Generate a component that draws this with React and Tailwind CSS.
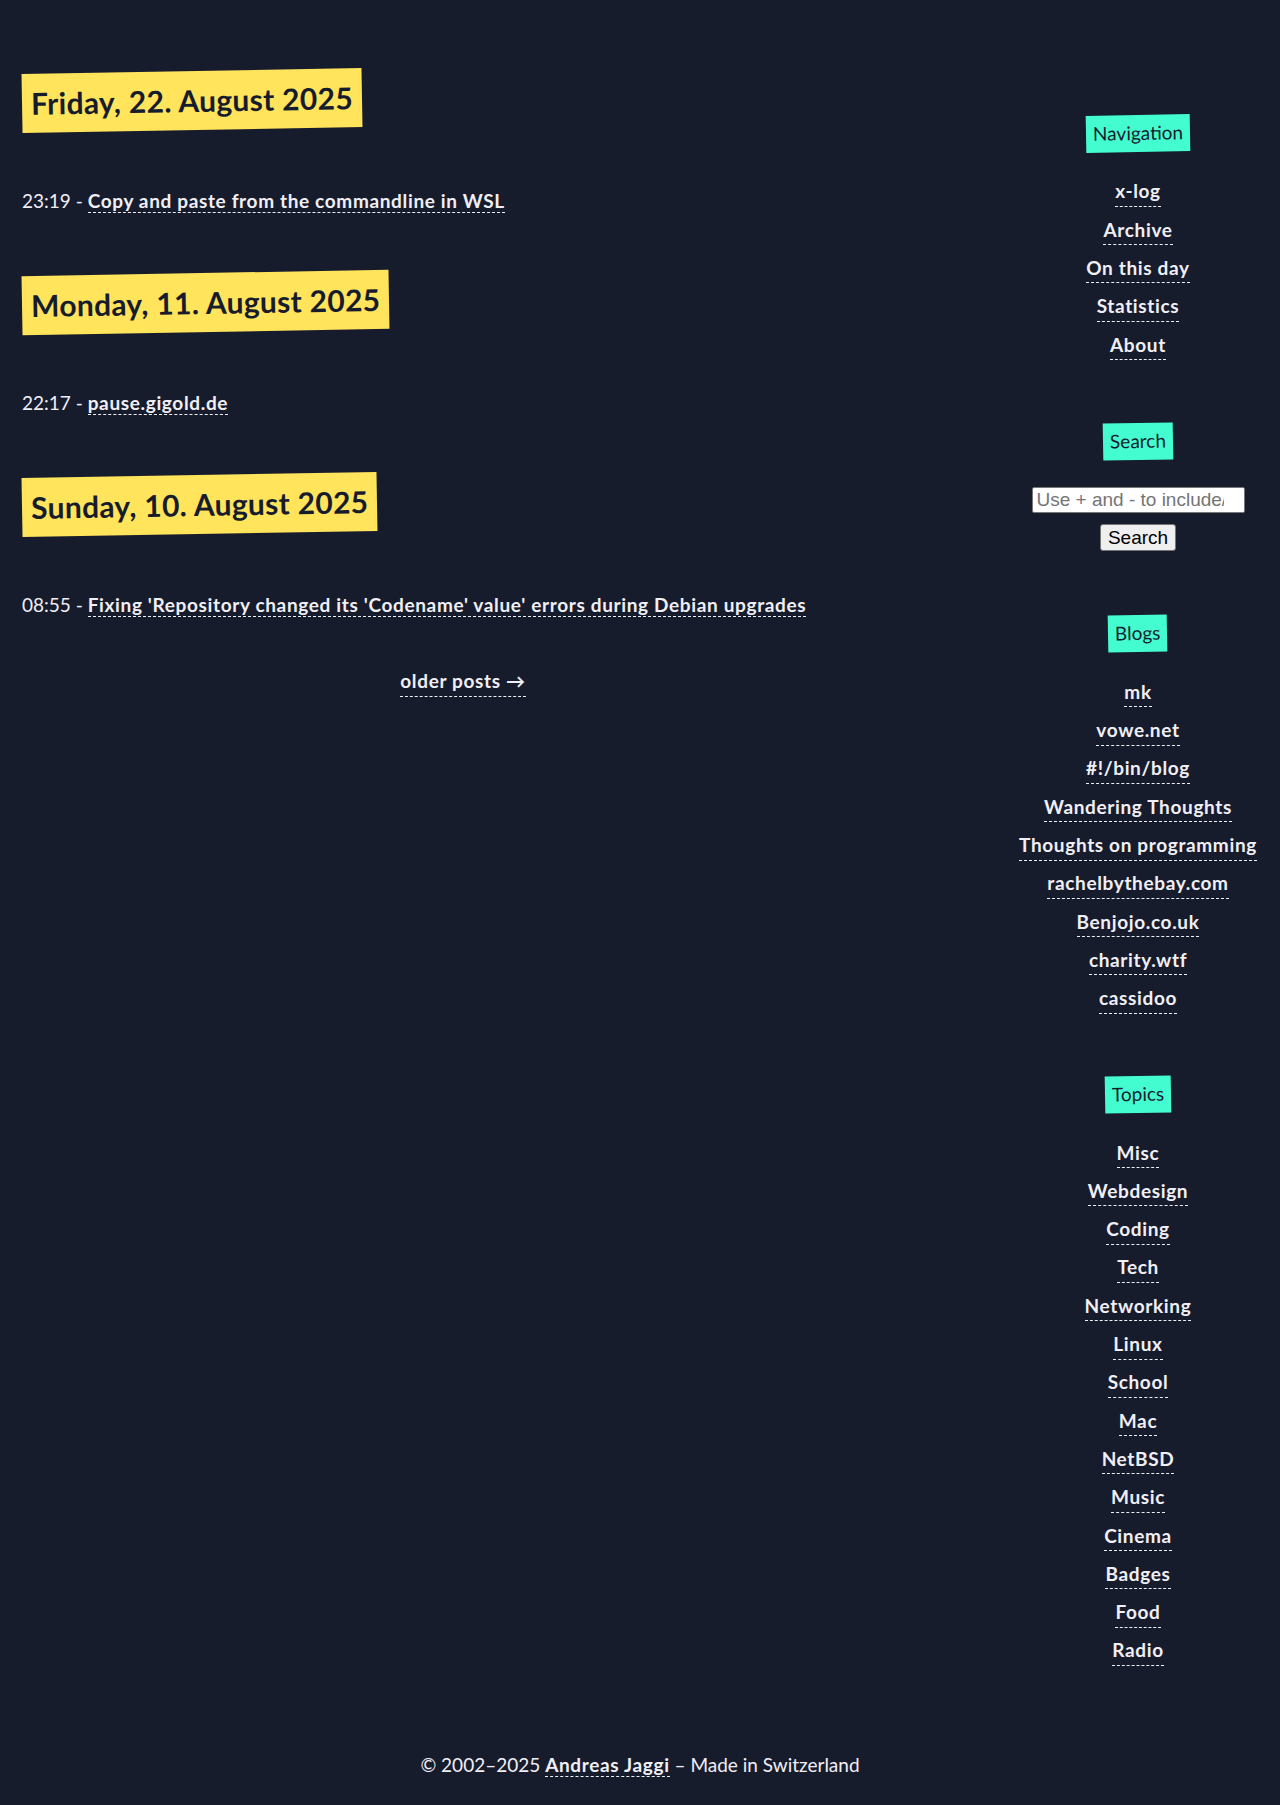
import React from "react"

const days = [
  { date: "Friday, 22. August 2025", time: "23:19", title: "Copy and paste from the commandline in WSL" },
  { date: "Monday, 11. August 2025", time: "22:17", title: "pause.gigold.de" },
  { date: "Sunday, 10. August 2025", time: "08:55", title: "Fixing 'Repository changed its 'Codename' value' errors during Debian upgrades" },
]

const nav = ["x-log", "Archive", "On this day", "Statistics", "About"]
const blogs = [
  "mk",
  "vowe.net",
  "#!/bin/blog",
  "Wandering Thoughts",
  "Thoughts on programming",
  "rachelbythebay.com",
  "Benjojo.co.uk",
  "charity.wtf",
  "cassidoo",
]
const topics = [
  "Misc",
  "Webdesign",
  "Coding",
  "Tech",
  "Networking",
  "Linux",
  "School",
  "Mac",
  "NetBSD",
  "Music",
  "Cinema",
  "Badges",
  "Food",
  "Radio",
]

const Link = ({ children }) => (
  <a href="#" className="font-bold tracking-[0.65px] text-[#f1eff6] border-b border-dashed border-[#f1eff6]">
    {children}
  </a>
)

const Tag = ({ children }) => (
  <div className="flex justify-center">
    <h3 className="h-[37px] px-[7px] flex items-center bg-[#43fdd0] text-[#171c2c] text-[19px] -rotate-1">
      {children}
    </h3>
  </div>
)

const LinkList = ({ items }) => (
  <ul className="mt-[21px] flex flex-col items-center">
    {items.map((item) => (
      <li key={item} className="h-[38.3px] flex items-center">
        <Link>{item}</Link>
      </li>
    ))}
  </ul>
)

export default function App() {
  return (
    <div
      className="min-h-[1805px] bg-[#171c2c] text-[#f1eff6] text-[19px]"
      style={{ fontFamily: "Lato, 'Noto Sans', sans-serif" }}
    >
      <div className="flex justify-between pl-[22px] pr-[14px]">
        {/* Posts */}
        <main className="w-[882px] pt-[71px]">
          {days.map((day, i) => (
            <section key={day.date} className={i > 0 ? "mt-[57px]" : ""}>
              <div className="flex">
                <h2 className="h-[59px] px-[9px] flex items-center bg-[#ffe45c] text-[#171c2c] text-[30px] font-bold tracking-[0.3px] -rotate-1">
                  {day.date}
                </h2>
              </div>
              <p className="mt-[56px] h-[30px] flex items-center">
                <span>
                  {day.time} - <Link>{day.title}</Link>
                </span>
              </p>
            </section>
          ))}
          <p className="mt-[47px] h-[30px] flex items-center justify-center">
            <Link>older posts →</Link>
          </p>
        </main>

        {/* Sidebar */}
        <aside className="w-[256px] pt-[115px]">
          <Tag>Navigation</Tag>
          <LinkList items={nav} />

          <div className="mt-[59px]">
            <Tag>Search</Tag>
            <form
              className="mt-[27px] flex flex-col items-center gap-[11px]"
              style={{ fontFamily: "'Liberation Sans', Arial, sans-serif" }}
            >
              <input
                type="text"
                placeholder="Use + and - to include/exclude words"
                className="w-[213px] h-[26px] pl-[4px] pr-[20px] bg-white border border-[#767676] rounded-[2px] text-[19px] text-black placeholder:text-[#757575]"
              />
              <button
                type="button"
                className="w-[76px] h-[27px] bg-[#efefef] border border-[#767676] rounded-[3px] text-[19px] leading-none text-black"
              >
                Search
              </button>
            </form>
          </div>

          <div className="mt-[64px]">
            <Tag>Blogs</Tag>
            <LinkList items={blogs} />
          </div>

          <div className="mt-[58px]">
            <Tag>Topics</Tag>
            <LinkList items={topics} />
          </div>
        </aside>
      </div>

      <footer className="mt-[80px] h-[30px] flex items-center justify-center">
        <span>
          © 2002–2025 <Link>Andreas Jaggi</Link> – Made in Switzerland
        </span>
      </footer>
    </div>
  )
}
